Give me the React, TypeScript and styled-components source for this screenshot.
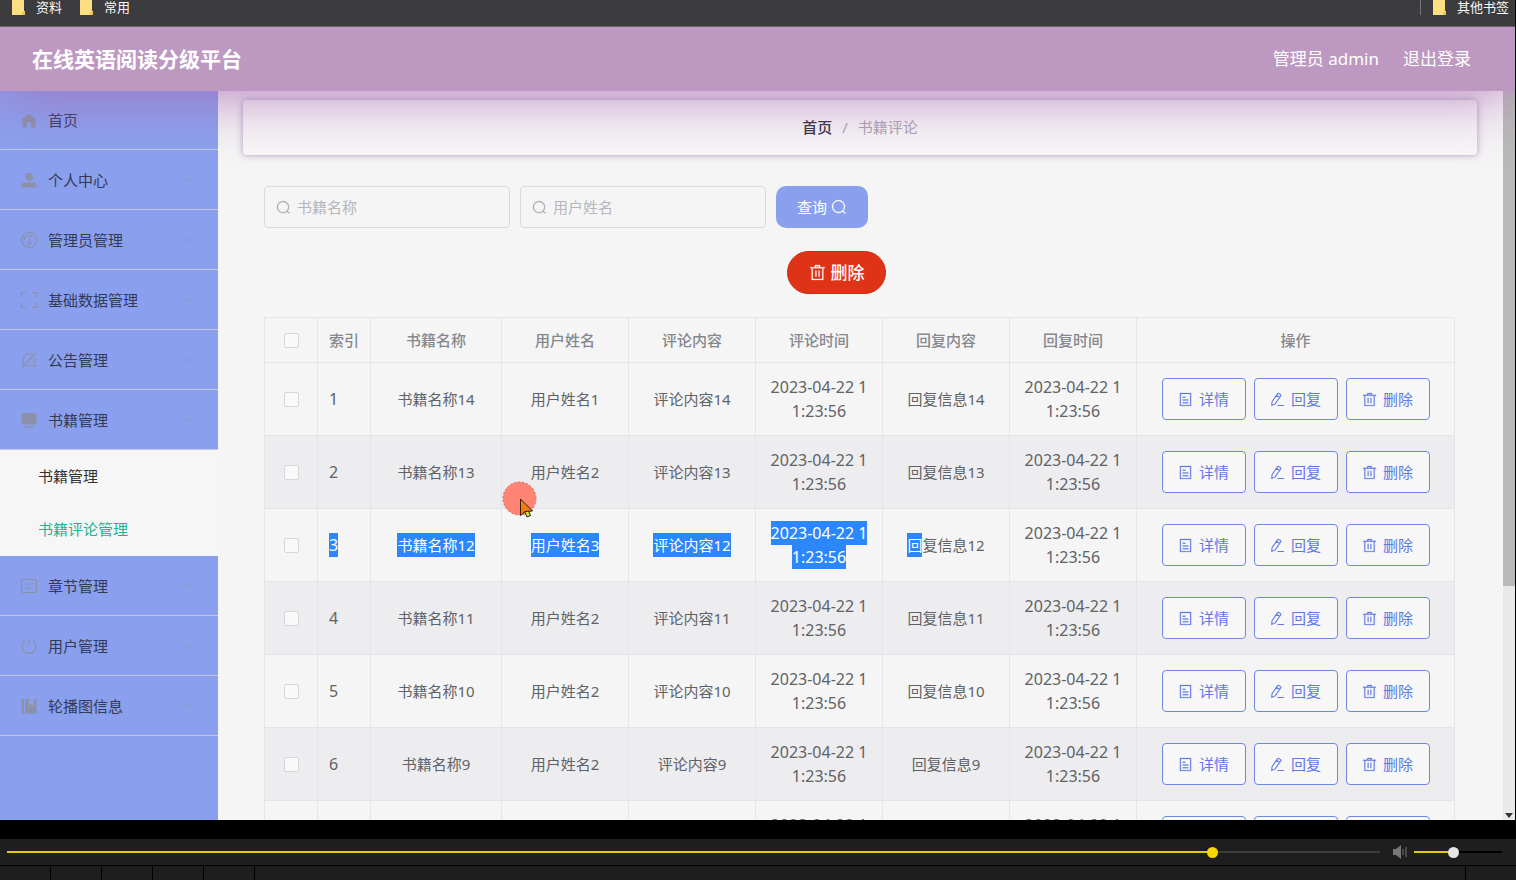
import React from "react";
import styled, { createGlobalStyle, css } from "styled-components";

const GlobalStyle = createGlobalStyle`
  *, *::before, *::after { box-sizing: border-box; }
  body {
    margin: 0;
    background: #000;
    color: #606266;
    font-family: "Noto Sans", "Noto Sans CJK SC", sans-serif;
    font-size: 15px;
    line-height: 24px;
  }
  button, input { font: inherit; }
  a { color: inherit; text-decoration: none; }
`;

/* ---------- Frame ---------- */

const Frame = styled.div`
  display: flex;
  flex-direction: column;
  height: 100vh;
  overflow: hidden;
`;

const Screen = styled.div`
  position: relative;
  display: flex;
  flex: 1;
  flex-direction: column;
  min-height: 0;
  border-right: 1px solid #000;
  background: #f5f5f5;
  overflow: hidden;
`;

const BookmarkBar = styled.nav`
  position: relative;
  z-index: 3;
  display: flex;
  flex-shrink: 0;
  gap: 18px;
  height: 27px;
  padding: 0 6px 0 12px;
  background: #3c3c3e;
  border-bottom: 1px solid #6b5f6e;
`;

const Bookmark = styled.a<{ $last?: boolean }>`
  display: flex;
  align-items: center;
  gap: 11px;
  height: 15px;
  color: #f8f8f8;
  font-size: 13px;
  line-height: 15px;
  ${(p) =>
    p.$last &&
    css`
      margin-left: auto;
      padding-left: 12px;
      border-left: 1px solid #77777a;
    `}
`;

const Header = styled.header`
  position: relative;
  z-index: 2;
  display: flex;
  flex-shrink: 0;
  align-items: center;
  gap: 24px;
  height: 63px;
  padding: 0 44px 0 32px;
  background: #bd98c1;
  color: #fff;
  font-size: 17px;
  box-shadow: 0 1px 0 #bd98c1, 0 1px 64px rgba(168, 104, 176, 0.95);
`;

const Title = styled.h1`
  flex: 1;
  margin: 0;
  font-size: 21px;
  font-weight: 700;
  line-height: 32px;
`;

const Body = styled.div`
  display: flex;
  flex: 1;
  min-height: 0;
`;

/* ---------- Sidebar ---------- */

const Sidebar = styled.nav`
  flex: 0 0 218px;
  background: #8aa0ee;
  overflow: hidden;
`;

const MenuItem = styled.a`
  display: flex;
  align-items: center;
  gap: 10px;
  height: 60px;
  padding: 0 24px 0 20px;
  border-bottom: 1px solid #c3c8e0;
  color: #343a55;
  svg { color: #8b91a6; }
`;

const MenuLabel = styled.span`
  flex: 1;
`;

const SubItem = styled.a<{ $active?: boolean }>`
  display: flex;
  align-items: center;
  height: 53px;
  padding: 0 0 2px 38px;
  background: #f6f6f6;
  color: ${(p) => (p.$active ? "#1bb394" : "#303133")};
`;

/* ---------- Content ---------- */

const Content = styled.main`
  flex: 1;
  min-width: 0;
  padding: 10px 26px 0 25px;
  overflow: hidden;
`;

const Crumbs = styled.nav`
  display: flex;
  align-items: center;
  justify-content: center;
  gap: 10px;
  height: 55px;
  padding-bottom: 2px;
  border-radius: 4px;
  background: #f8f7f8;
  box-shadow: 0 0 7px rgba(128, 92, 150, 0.6);
  color: #aaa5b4;
`;

const CrumbLink = styled.a`
  color: #33303c;
  font-weight: 500;
`;

const Section = styled.section`
  padding: 31px 23px 0 21px;
`;

const SearchRow = styled.form`
  display: flex;
  gap: 10px;
`;

const Field = styled.label`
  display: flex;
  align-items: center;
  gap: 6px;
  width: 246px;
  height: 42px;
  padding: 0 11px;
  border: 1px solid #dadbdf;
  border-radius: 4px;
  color: #aaacb2;
`;

const FieldInput = styled.input`
  flex: 1;
  min-width: 0;
  padding: 0;
  border: 0;
  outline: 0;
  background: transparent;
  color: #606266;
  &::placeholder { color: #b4b6bc; opacity: 1; }
`;

const QueryButton = styled.button`
  display: flex;
  align-items: center;
  justify-content: center;
  gap: 4px;
  width: 92px;
  height: 42px;
  padding: 0;
  border: 0;
  border-radius: 10px;
  background: #8aa0ee;
  color: #fff;
`;

const BatchRow = styled.div`
  display: flex;
  justify-content: center;
  padding: 23px 45px 23px 0;
`;

const BatchDelete = styled.button`
  display: flex;
  align-items: center;
  justify-content: center;
  gap: 5px;
  width: 99px;
  height: 43px;
  padding: 0;
  border: 1px solid #cf2a12;
  border-radius: 22px;
  background: #df3317;
  color: #fff;
  font-size: 17px;
  font-weight: 500;
`;

const Table = styled.table`
  width: 100%;
  table-layout: fixed;
  border-collapse: collapse;
`;

const HeadCell = styled.th<{ $left?: boolean }>`
  height: 45px;
  padding: 0 11px;
  border: 1px solid #e5e4e8;
  color: #85888e;
  font-weight: 500;
  text-align: ${(p) => (p.$left ? "left" : "center")};
`;

const Row = styled.tr`
  height: 73px;
  &:nth-child(even) { background: #ededf0; }
`;

const Cell = styled.td<{ $left?: boolean }>`
  padding: 0 11px;
  border: 1px solid #e5e4e8;
  font-size: ${(p) => (p.$left ? "16px" : "15px")};
  text-align: ${(p) => (p.$left ? "left" : "center")};
  white-space: nowrap;
`;

const Tick = styled.input`
  display: block;
  width: 15px;
  height: 15px;
  margin: 0 auto;
  appearance: none;
  border: 1px solid #d6d7db;
  border-radius: 2px;
  background: #f9f9f9;
`;

const TimeLine = styled.div`
  font-size: 16px;
  line-height: 24px;
`;

const Selected = styled.mark`
  display: inline-block;
  background: #2b87fb;
  color: #fff;
  line-height: 24px;
`;

const Actions = styled.div`
  display: flex;
  justify-content: center;
  gap: 8px;
`;

const ActionButton = styled.button`
  display: flex;
  align-items: center;
  justify-content: center;
  gap: 6px;
  width: 84px;
  height: 42px;
  padding: 0;
  border: 1px solid #6f87e4;
  border-radius: 4px;
  background: #f7f7f8;
  color: #6079e4;
`;

const ScrollTrack = styled.div`
  display: flex;
  flex: 0 0 12px;
  flex-direction: column;
  align-items: center;
  justify-content: space-between;
  background: #e9e9e7;
`;

const ScrollThumb = styled.div`
  width: 100%;
  height: 68%;
  background: #b9b9b8;
`;

const ScrollArrow = styled.span`
  margin-bottom: 2px;
  border: 4px solid transparent;
  border-top: 5px solid #333;
  border-bottom: 0;
`;

const Pointer = styled.svg`
  position: absolute;
  z-index: 3;
  left: 502px;
  top: 481px;
`;

/* ---------- Player ---------- */

const Player = styled.footer`
  flex-shrink: 0;
  padding-top: 19px;
  background: #000;
`;

const Controls = styled.div`
  display: flex;
  align-items: center;
  height: 26px;
  padding: 0 14px 1px 7px;
  background: #1e1e1e;
  svg { margin: 0 6px 0 12px; }
`;

const Slider = styled.input<{ $fill: number; $knob: string; $rest: string; $wide?: boolean }>`
  height: 12px;
  margin: 0;
  appearance: none;
  background: transparent;
  ${(p) => (p.$wide ? "flex: 1; min-width: 0;" : "flex: 0 0 88px; width: 88px;")}
  &::-webkit-slider-runnable-track {
    height: 2px;
    background: linear-gradient(
      to right,
      #e3cb06 ${(p) => p.$fill}%,
      ${(p) => p.$rest} ${(p) => p.$fill}%
    );
  }
  &::-webkit-slider-thumb {
    width: 11px;
    height: 11px;
    margin-top: -4px;
    appearance: none;
    border-radius: 50%;
    background: ${(p) => p.$knob};
  }
`;

const Strip = styled.div`
  display: flex;
  height: 15px;
  border-top: 1px solid #000;
  background: #1e1e1e;
`;

const StripCell = styled.div<{ $end?: boolean }>`
  flex: 0 0 51px;
  border-right: ${(p) => (p.$end ? "0" : "1px solid #000")};
  border-left: ${(p) => (p.$end ? "1px solid #000" : "0")};
  margin-left: ${(p) => (p.$end ? "auto" : "0")};
`;

/* ---------- Icons ---------- */

const PATHS = {
  search:
    "m795.904 750.72 124.992 124.928a32 32 0 0 1-45.248 45.248L750.656 795.904a416 416 0 1 1 45.248-45.248zM480 832a352 352 0 1 0 0-704 352 352 0 0 0 0 704z",
  trash:
    "M160 256H96a32 32 0 0 1 0-64h256V95.936a32 32 0 0 1 32-32h256a32 32 0 0 1 32 32V192h256a32 32 0 1 1 0 64h-64v672a32 32 0 0 1-32 32H192a32 32 0 0 1-32-32zm448-64v-64H416v64zM224 896h576V256H224zm192-128a32 32 0 0 1-32-32V416a32 32 0 0 1 64 0v320a32 32 0 0 1-32 32m192 0a32 32 0 0 1-32-32V416a32 32 0 0 1 64 0v320a32 32 0 0 1-32 32",
  tickets:
    "M192 128v768h640V128zm-32-64h704a32 32 0 0 1 32 32v832a32 32 0 0 1-32 32H160a32 32 0 0 1-32-32V96a32 32 0 0 1 32-32m160 448h384v64H320zm0-192h192v64H320zm0 384h384v64H320z",
};

const Glyph = ({ name, size = 15 }: { name: keyof typeof PATHS; size?: number }) => (
  <svg width={size} height={size} viewBox="0 0 1024 1024" fill="currentColor" stroke="currentColor" strokeWidth="14" aria-hidden="true">
    <path d={PATHS[name]} />
  </svg>
);

const PenIcon = () => (
  <svg width="15" height="15" viewBox="0 0 15 15" fill="none" stroke="currentColor" strokeWidth="1.1" aria-hidden="true">
    <path d="M2 9.8 7.6 1.6Q8 1 8.7 1.4L10.6 2.7Q11.2 3.1 10.8 3.7L5.2 11.9 1.8 13.4ZM6.5 3.2 9.7 5.4M7.5 13.5H14" />
  </svg>
);

const LineIcon = ({ children }: { children: React.ReactNode }) => (
  <svg width="18" height="18" viewBox="0 0 18 18" fill="none" stroke="currentColor" strokeWidth="1.2" aria-hidden="true">
    {children}
  </svg>
);

const menuIcons = {
  home: <path fill="currentColor" stroke="none" d="M9 2.5 1.6 8.8 2.6 10v6.500h4.200v-5.200h4.400v5.200h4.200V10l1-1.200Z" />,
  user: (
    <g fill="currentColor" stroke="none">
      <circle cx="9" cy="5.8" r="4" />
      <path d="M1.5 16.5v-2q0-3 3-3h9q3 0 3 3v2Z" />
    </g>
  ),
  gauge: <path d="M9 1.5a7.5 7.5 0 1 0 .1 0ZM4.3 9.2A4.7 4.7 0 0 1 12.8 6.5M9.9 6.5 9.3 11M8 11a1.5 1.5 0 1 0 2.3 0" />,
  corners: <path d="M6 1.5H1.5V6M12 1.5h4.500V6M6 16.500H1.500V12M12 16.500h4.500V12" />,
  bell: <path d="M3.500 14.500V8a5.500 5.500 0 0 1 8-4.900M14.200 6.500l.3 1.500v6.500M1.500 15h15M3 16 14.500 2.500" />,
  screen: (
    <g fill="currentColor" stroke="none">
      <rect x="1.500" y="2" width="15" height="11.500" rx="2" />
      <rect x="5" y="15" width="8" height="1.500" />
    </g>
  ),
  card: <path d="M3 2.500h12q1.500 0 1.500 1.500v10q0 1.500-1.500 1.500H3q-1.500 0-1.500-1.500V4q0-1.500 1.500-1.500ZM5 7h4M5 11h6M11 7.500l2-1.500" />,
  power: <path d="M5 3.600a7 7 0 1 0 8 0M9 1.500v6" />,
  book: <path fill="currentColor" stroke="none" d="M1.500 2H4v14.500H1.500ZM5 2h4v7l2.500-2L14 9V2h2.500v14.500H5Z" />,
};

type MenuEntry = { label: string; icon: keyof typeof menuIcons; arrow?: "up" | "down" };

const menuTop: MenuEntry[] = [
  { label: "首页", icon: "home" },
  { label: "个人中心", icon: "user", arrow: "down" },
  { label: "管理员管理", icon: "gauge", arrow: "down" },
  { label: "基础数据管理", icon: "corners", arrow: "down" },
  { label: "公告管理", icon: "bell", arrow: "down" },
  { label: "书籍管理", icon: "screen", arrow: "up" },
];

const menuBottom: MenuEntry[] = [
  { label: "章节管理", icon: "card", arrow: "down" },
  { label: "用户管理", icon: "power", arrow: "down" },
  { label: "轮播图信息", icon: "book", arrow: "down" },
];

const MenuLink = ({ label, icon, arrow }: MenuEntry) => (
  <MenuItem href="#">
    <LineIcon>{menuIcons[icon]}</LineIcon>
    <MenuLabel>{label}</MenuLabel>
    {arrow && (
      <svg width="10" height="10" viewBox="0 0 10 10" fill="none" stroke="currentColor" opacity="0.7" aria-hidden="true">
        <path d={arrow === "down" ? "M1 2.500 5 6.500 9 2.500" : "M1 6.500 5 2.500 9 6.500"} />
      </svg>
    )}
  </MenuItem>
);

const FolderIcon = () => (
  <svg width="13" height="15" viewBox="0 0 13 15" aria-hidden="true">
    <path d="M0 0h12v11h1v4H0Z" fill="#fbdf82" />
    <path d="M10 12h3v3h-3Z" fill="#e9c65a" />
  </svg>
);

/* ---------- Data ---------- */

const columns = [
  { label: "书籍名称", width: 131 },
  { label: "用户姓名", width: 127 },
  { label: "评论内容", width: 127 },
  { label: "评论时间", width: 127 },
  { label: "回复内容", width: 127 },
  { label: "回复时间", width: 127 },
  { label: "操作", width: 318 },
];

const rows = [
  { id: 1, no: 14, user: 1 },
  { id: 2, no: 13, user: 2 },
  { id: 3, no: 12, user: 3, selected: true },
  { id: 4, no: 11, user: 2 },
  { id: 5, no: 10, user: 2 },
  { id: 6, no: 9, user: 2 },
  { id: 7, no: 8, user: 1 },
];

const timeParts = ["2023-04-22 1", "1:23:56"];

const Text = ({ on, children }: { on?: boolean; children: React.ReactNode }) =>
  on ? <Selected>{children}</Selected> : <>{children}</>;

const Time = ({ on }: { on?: boolean }) => (
  <>
    {timeParts.map((part) => (
      <TimeLine key={part}>
        <Text on={on}>{part}</Text>
      </TimeLine>
    ))}
  </>
);

export default function App() {
  return (
    <Frame>
      <GlobalStyle />
      <Screen>
        <BookmarkBar>
          <Bookmark href="#"><FolderIcon />资料</Bookmark>
          <Bookmark href="#"><FolderIcon />常用</Bookmark>
          <Bookmark href="#" $last><FolderIcon />其他书签</Bookmark>
        </BookmarkBar>
        <Header>
          <Title>在线英语阅读分级平台</Title>
          <span>管理员 admin</span>
          <a href="#">退出登录</a>
        </Header>
        <Body>
          <Sidebar>
            {menuTop.map((m) => <MenuLink key={m.label} {...m} />)}
            <SubItem href="#">书籍管理</SubItem>
            <SubItem href="#" $active>书籍评论管理</SubItem>
            {menuBottom.map((m) => <MenuLink key={m.label} {...m} />)}
          </Sidebar>
          <Content>
            <Crumbs>
              <CrumbLink href="#">首页</CrumbLink>
              <span>/</span>
              <span>书籍评论</span>
            </Crumbs>
            <Section>
              <SearchRow onSubmit={(e) => e.preventDefault()}>
                <Field>
                  <Glyph name="search" />
                  <FieldInput type="text" placeholder="书籍名称" aria-label="书籍名称" />
                </Field>
                <Field>
                  <Glyph name="search" />
                  <FieldInput type="text" placeholder="用户姓名" aria-label="用户姓名" />
                </Field>
                <QueryButton type="submit">查询 <Glyph name="search" size={16} /></QueryButton>
              </SearchRow>
              <BatchRow>
                <BatchDelete type="button"><Glyph name="trash" size={17} />删除</BatchDelete>
              </BatchRow>
              <Table>
                <colgroup>
                  <col width={53} />
                  <col width={53} />
                  {columns.map((c) => <col key={c.label} width={c.width} />)}
                </colgroup>
                <thead>
                  <tr>
                    <HeadCell><Tick type="checkbox" aria-label="全选" /></HeadCell>
                    <HeadCell $left>索引</HeadCell>
                    {columns.map((c) => <HeadCell key={c.label}>{c.label}</HeadCell>)}
                  </tr>
                </thead>
                <tbody>
                  {rows.map((r) => (
                    <Row key={r.id}>
                      <Cell><Tick type="checkbox" aria-label={`选择 ${r.id}`} /></Cell>
                      <Cell $left><Text on={r.selected}>{r.id}</Text></Cell>
                      <Cell><Text on={r.selected}>{`书籍名称${r.no}`}</Text></Cell>
                      <Cell><Text on={r.selected}>{`用户姓名${r.user}`}</Text></Cell>
                      <Cell><Text on={r.selected}>{`评论内容${r.no}`}</Text></Cell>
                      <Cell><Time on={r.selected} /></Cell>
                      <Cell><Text on={r.selected}>回</Text>{`复信息${r.no}`}</Cell>
                      <Cell><Time /></Cell>
                      <Cell>
                        <Actions>
                          <ActionButton type="button"><Glyph name="tickets" />详情</ActionButton>
                          <ActionButton type="button"><PenIcon />回复</ActionButton>
                          <ActionButton type="button"><Glyph name="trash" />删除</ActionButton>
                        </Actions>
                      </Cell>
                    </Row>
                  ))}
                </tbody>
              </Table>
            </Section>
          </Content>
          <ScrollTrack>
            <ScrollThumb />
            <ScrollArrow />
          </ScrollTrack>
        </Body>
        <Pointer width="36" height="40" viewBox="0 0 36 40" aria-hidden="true">
          <circle cx="17.500" cy="17.500" r="16.500" fill="#ff8473" stroke="#d9665c" strokeDasharray="2 2" />
          <path d="m22 29 3 7 3.500-1.500-3-6.500Z" fill="#d3e32b" stroke="#222" />
          <path d="M18.500 18v16.500l4.500-4 7.500-.500Z" fill="#ee7c10" stroke="#3a1c08" strokeLinejoin="round" />
        </Pointer>
      </Screen>
      <Player>
        <Controls>
          <Slider type="range" aria-label="播放进度" min={0} max={1000} defaultValue={881} $fill={87.8} $knob="#f5d800" $rest="#3c3c3c" $wide />
          <svg width="16" height="14" viewBox="0 0 16 14" fill="#777" aria-hidden="true">
            <path d="M1 4h3l5-4v14L4 10H1ZM10.500 4h1v6h-1ZM13.500 2h1v10h-1Z" />
          </svg>
          <Slider type="range" aria-label="音量" min={0} max={1000} defaultValue={440} $fill={44} $knob="#e6e6e6" $rest="#000" />
        </Controls>
        <Strip>
          <StripCell />
          <StripCell />
          <StripCell />
          <StripCell />
          <StripCell />
          <StripCell $end />
        </Strip>
      </Player>
    </Frame>
  );
}
